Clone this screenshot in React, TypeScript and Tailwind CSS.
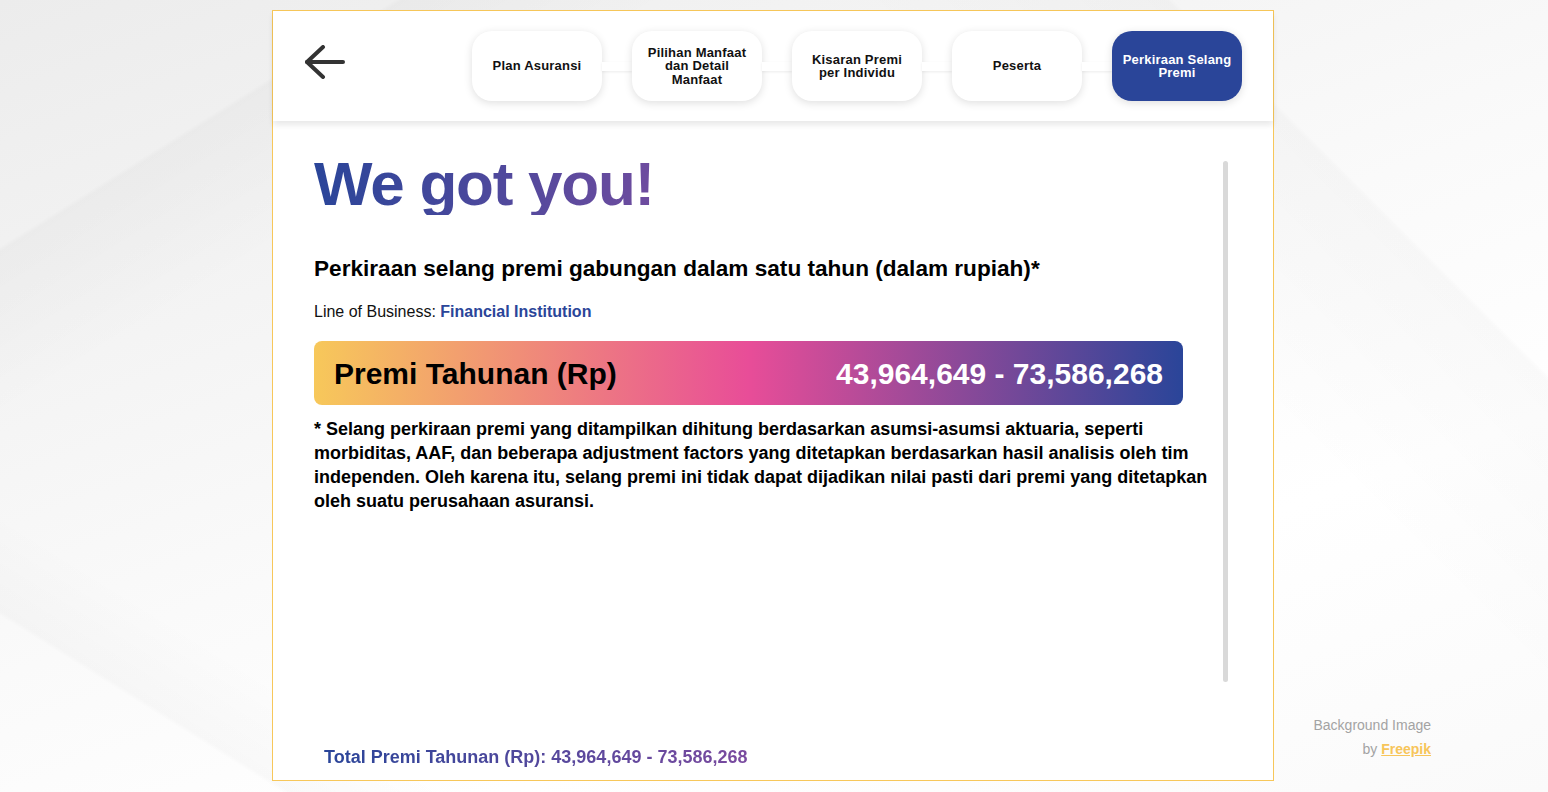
import React from 'react';

const steps = [
  { label: 'Plan Asuransi' },
  { label: 'Pilihan Manfaat dan Detail Manfaat' },
  { label: 'Kisaran Premi per Individu' },
  { label: 'Peserta' },
  { label: 'Perkiraan Selang Premi', active: true },
];

function BackArrow() {
  return (
    <svg width="40" height="34" viewBox="0 0 40 34" fill="none" stroke="#333333" strokeWidth="4" strokeLinecap="round" strokeLinejoin="round">
      <path d="M38 17H2" />
      <path d="M18 2 2 17l16 15" />
    </svg>
  );
}

export default function App() {
  return (
    <div className="relative min-h-[792px] w-full overflow-hidden bg-[linear-gradient(160deg,#ececec_0%,#f3f3f3_25%,#fafafa_50%,#ffffff_72%,#fafafa_100%)] font-['Liberation_Sans',Arial,sans-serif]">
      {/* soft diagonal folds of the background */}
      <div className="pointer-events-none absolute inset-0 bg-[linear-gradient(148deg,transparent_0%,transparent_14%,rgba(0,0,0,0.025)_14.3%,transparent_24%,transparent_100%)]" />
      <div className="pointer-events-none absolute inset-0 bg-[linear-gradient(32deg,transparent_0%,transparent_10%,rgba(0,0,0,0.018)_10.3%,transparent_16%,transparent_100%)]" />
      <div className="pointer-events-none absolute inset-0 bg-[linear-gradient(-135deg,transparent_0%,transparent_16%,rgba(0,0,0,0.02)_16.3%,transparent_30%,transparent_100%)]" />

      <div className="relative flex pl-[272px] pt-[10px]">
        <div className="flex h-[771px] w-[1002px] flex-col border border-[#f7c75a] bg-white">
          {/* header / stepper */}
          <div className="relative z-10 flex h-[110px] shrink-0 items-center justify-between bg-white pl-[32px] pr-[31px] shadow-[0_4px_6px_rgba(0,0,0,0.09)]">
            <div className="mb-2 flex h-[34px] w-[40px] items-center">
              <BackArrow />
            </div>
            <div className="flex items-center">
              {steps.map((s, i) => (
                <React.Fragment key={s.label}>
                  {i > 0 && <div className="h-[9px] w-[30px] bg-white shadow-[0_1px_3px_rgba(0,0,0,0.08)]" />}
                  <div
                    className={`flex h-[70px] w-[130px] items-center justify-center rounded-[20px] px-[10px] text-center text-[13px] leading-[13.5px] font-bold tracking-[0.2px] shadow-[0_2px_8px_rgba(0,0,0,0.13)] ${
                      s.active ? 'bg-[#2a4599] text-white' : 'bg-white text-[#111]'
                    }`}
                  >
                    {s.label}
                  </div>
                </React.Fragment>
              ))}
            </div>
          </div>

          {/* content */}
          <div className="flex flex-1 pl-[41px] pr-[45px] pt-8">
            <div className="flex-1">
              <h1 className="w-fit bg-[linear-gradient(90deg,#2a4599_0%,#6f4c9f_100%)] bg-clip-text pr-1 text-[62px] leading-none font-bold tracking-[-0.02em] text-transparent">
                We got you!
              </h1>
              <h2 className="mt-[41px] text-[22.6px] leading-[26px] font-bold text-black">
                Perkiraan selang premi gabungan dalam satu tahun (dalam rupiah)*
              </h2>
              <p className="mt-[18px] text-base leading-6 text-[#111]">
                Line of Business: <span className="font-bold text-[#2a4599]">Financial Institution</span>
              </p>
              <div className="mt-[17px] flex h-16 w-[869px] items-center justify-between rounded-lg bg-[linear-gradient(90deg,#f7c85a_0%,#e84d98_50%,#2a4599_100%)] pl-5 pr-5">
                <span className="text-[30px] font-bold text-black">Premi Tahunan (Rp)</span>
                <span className="text-[30px] font-bold text-white">43,964,649 - 73,586,268</span>
              </div>
              <p className="mt-3 text-[18px] leading-6 font-bold text-black">
                * Selang perkiraan premi yang ditampilkan dihitung berdasarkan asumsi-asumsi aktuaria, seperti morbiditas, AAF, dan beberapa adjustment factors yang ditetapkan berdasarkan hasil analisis oleh tim independen. Oleh karena itu, selang premi ini tidak dapat dijadikan nilai pasti dari premi yang ditetapkan oleh suatu perusahaan asuransi.
              </p>
            </div>
            <div className="ml-2 mt-2 h-[521px] w-[5px] shrink-0 rounded-full bg-[#d9d9d9]" />
          </div>

          {/* footer total */}
          <div className="shrink-0 pb-[11px] pl-[51px]">
            <p className="w-fit bg-[linear-gradient(90deg,#2a4599_0%,#7a4a9f_100%)] bg-clip-text text-[18px] leading-6 font-bold text-transparent">
              Total Premi Tahunan (Rp): 43,964,649 - 73,586,268
            </p>
          </div>
        </div>
      </div>

      {/* credit */}
      <div className="absolute bottom-[31px] right-[117px] text-right text-[14px] leading-6 text-[#a3a3a3]">
        <div>Background Image</div>
        <div>
          by <span className="font-bold text-[#f7c55a] underline">Freepik</span>
        </div>
      </div>
    </div>
  );
}
